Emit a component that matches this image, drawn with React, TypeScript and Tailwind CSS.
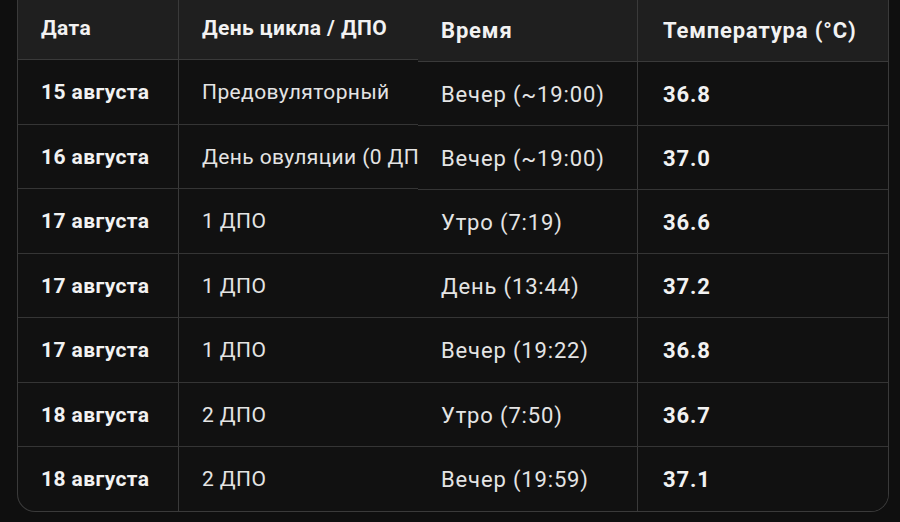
const rows = [
  { date: "15 августа", day: "Предовуляторный", time: "Вечер (~19:00)", temp: "36.8" },
  { date: "16 августа", day: "День овуляции (0 ДПО)", time: "Вечер (~19:00)", temp: "37.0" },
  { date: "17 августа", day: "1 ДПО", time: "Утро (7:19)", temp: "36.6" },
  { date: "17 августа", day: "1 ДПО", time: "День (13:44)", temp: "37.2" },
  { date: "17 августа", day: "1 ДПО", time: "Вечер (19:22)", temp: "36.8" },
  { date: "18 августа", day: "2 ДПО", time: "Утро (7:50)", temp: "36.7" },
  { date: "18 августа", day: "2 ДПО", time: "Вечер (19:59)", temp: "37.1" },
]

// left side rows are a touch taller than the scrolled right side
const leftHeights = ["h-[65px]", "h-[64px]", "h-[65px]", "h-[64px]", "h-[65px]", "h-[64px]", "h-[64px]"]

export default function App() {
  return (
    <div
      className="w-[900px] h-[522px] bg-[#0f0f0f] overflow-hidden text-[#e4e4e4]"
      style={{ fontFamily: "Roboto, 'Noto Sans', sans-serif" }}
    >
      <div className="ml-[17px] w-[872px] flex border-x border-b border-[#3a3a3a] rounded-b-[18px] overflow-hidden bg-[#111111]">
        {/* fixed left part */}
        <div className="w-[400px] shrink-0 text-[21px] tracking-[0.4px]">
          <div className="h-[60px] flex bg-[#1f1f1f] border-b border-[#3a3a3a] font-bold text-[#f2f2f2]">
            <div className="w-[161px] shrink-0 border-r border-[#3a3a3a] pl-[23px] pb-[2px] flex items-center">Дата</div>
            <div className="flex-1 min-w-0 pl-[23px] pb-[2px] flex items-center whitespace-nowrap">День цикла / ДПО</div>
          </div>
          {rows.map((r, i) => (
            <div
              key={i}
              className={`${leftHeights[i]} flex ${i < rows.length - 1 ? "border-b border-[#353535]" : ""}`}
            >
              <div className="w-[161px] shrink-0 border-r border-[#3a3a3a] pl-[23px] pt-[2px] flex items-center font-bold text-[#f2f2f2]">
                {r.date}
              </div>
              <div className="flex-1 min-w-0 pl-[23px] pt-[2px] flex items-center whitespace-nowrap">{r.day}</div>
            </div>
          ))}
        </div>

        {/* scrolled right part, sits over the overflow of the left one */}
        <div className="flex-1 relative z-10 bg-[#111111] text-[22px] tracking-[0.85px]">
          <div className="h-[62px] flex bg-[#1f1f1f] border-b border-[#3a3a3a] font-bold text-[#f2f2f2]">
            <div className="w-[220px] shrink-0 border-r border-[#3a3a3a] pl-[23px] pb-[1px] flex items-center">Время</div>
            <div className="flex-1 min-w-0 pl-[25px] pb-[1px] flex items-center whitespace-nowrap">Температура (°C)</div>
          </div>
          {rows.map((r, i) => (
            <div
              key={i}
              className={`${i === 4 ? "h-[65px]" : "h-[64px]"} flex ${i < rows.length - 1 ? "border-b border-[#353535]" : ""}`}
            >
              <div className="w-[220px] shrink-0 border-r border-[#3a3a3a] pl-[23px] pt-[1px] flex items-center whitespace-nowrap">
                {r.time}
              </div>
              <div className="flex-1 min-w-0 pl-[25px] pt-[1px] flex items-center font-bold text-[#f2f2f2]">{r.temp}</div>
            </div>
          ))}
        </div>
      </div>
    </div>
  )
}
